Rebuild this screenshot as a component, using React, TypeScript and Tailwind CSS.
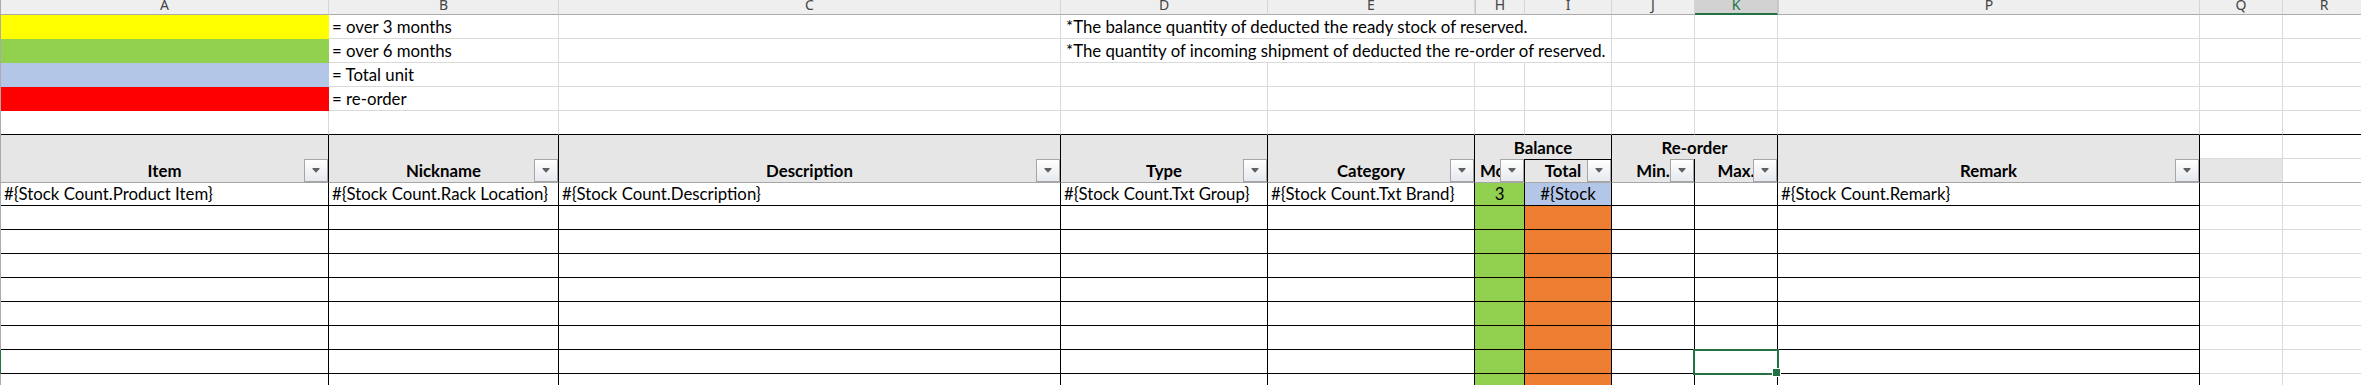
import React from "react";

const COLS =
  "grid grid-cols-[1px_328px_230px_502px_207px_207px_50px_87px_83px_83px_422px_83px_83px]";

const letters = ["A", "B", "C", "D", "E", "H", "I", "J", "K", "P", "Q", "R"];

function FilterBtn() {
  return (
    <div className="absolute right-0 bottom-0 z-10 flex h-[23px] w-[24px] items-center justify-center border border-[#a6a6a6] bg-linear-to-b from-white to-[#e6e9ef]">
      <svg width="8" height="5" viewBox="0 0 8 5">
        <path d="M0.5 0H7.5V1L4 4.8L0.5 1Z" fill="#606060" />
      </svg>
    </div>
  );
}

function T({ children, className = "" }: { children?: React.ReactNode; className?: string }) {
  return <span className={"whitespace-nowrap pb-[1px] " + className}>{children}</span>;
}

const legend = [
  {
    fill: "bg-[#ffff00]",
    label: "= over 3 months",
    note: "*The balance quantity of deducted the ready stock of reserved.",
  },
  {
    fill: "bg-[#92d050]",
    label: "= over 6 months",
    note: "*The quantity of incoming shipment of deducted the re-order of reserved.",
  },
  { fill: "bg-[#b4c6e7]", label: "= Total unit", note: "" },
  { fill: "bg-[#ff0000]", label: "= re-order", note: "" },
];

const GRID = "flex items-end overflow-hidden border-r border-b border-[#dadada]";
const GRID_NOR = "flex items-end border-b border-[#dadada]";
const DATA = "flex items-end overflow-hidden border-r border-b border-black";
const HEAD =
  "relative row-span-2 flex items-end justify-center overflow-hidden bg-[#e7e6e6] border-r border-b border-r-black border-b-[#a6a6a6] font-bold";
const HEAD7 =
  "relative flex items-end justify-center overflow-hidden bg-[#e7e6e6] border-r border-b border-r-black border-b-[#a6a6a6] font-bold";

type DataRow = {
  a?: string;
  b?: string;
  c?: string;
  d?: string;
  e?: string;
  h?: string;
  i?: string;
  p?: string;
};

const dataRows: DataRow[] = [
  {
    a: "#{Stock Count.Product Item}",
    b: "#{Stock Count.Rack Location}",
    c: "#{Stock Count.Description}",
    d: "#{Stock Count.Txt Group}",
    e: "#{Stock Count.Txt Brand}",
    h: "3",
    i: "#{Stock",
    p: "#{Stock Count.Remark}",
  },
  {},
  {},
  {},
  {},
  {},
  {},
  {},
  {},
];

export default function App() {
  return (
    <div className="h-[385px] w-[2361px] overflow-hidden bg-white text-[16.8px] leading-[20px] text-black [font-family:Lato,'Liberation_Sans',sans-serif]">
      {/* Column letters */}
      <div className={`${COLS} h-[15px]`}>
        <div className="bg-[#ababab]" />
        {letters.map((l) =>
          l === "K" ? (
            <div
              key={l}
              className="flex justify-center overflow-hidden border-r border-b-2 border-r-[#c6c6c6] border-b-[#217346] bg-[#d2d2d2] text-[#217346]"
            >
              <span className="-mt-[2px] text-[14px] leading-[14px] [font-family:'Noto_Sans',sans-serif]">{l}</span>
            </div>
          ) : (
            <div
              key={l}
              className={
                l === "H" || l === "P"
                  ? "flex justify-center overflow-hidden border-r border-b border-l border-l-[#c8c8c8] border-r-[#d5d5d5] border-b-[#ababab] bg-[#efefef] text-[#444]"
                  : "flex justify-center overflow-hidden border-r border-b border-r-[#d5d5d5] border-b-[#ababab] bg-[#efefef] text-[#444]"
              }
            >
              <span className="-mt-[2px] text-[14px] leading-[14px] [font-family:'Noto_Sans',sans-serif]">{l}</span>
            </div>
          )
        )}
      </div>

      {/* Legend rows */}
      {legend.map((r, idx) => (
        <div key={idx} className={`${COLS} h-[24px]`}>
          <div className="bg-[#ababab]" />
          <div className={r.fill} />
          <div className={GRID}>
            <T className="px-[3px]">{r.label}</T>
          </div>
          <div className={GRID} />
          {r.note ? (
            <>
              <div className={GRID_NOR}>
                <T className="px-[5px]">{r.note}</T>
              </div>
              <div className={GRID_NOR} />
              <div className={GRID_NOR} />
            </>
          ) : (
            <>
              <div className={GRID} />
              <div className={GRID} />
              <div className={GRID} />
            </>
          )}
          <div className={GRID} />
          <div className={GRID} />
          <div className={GRID} />
          <div className={GRID} />
          <div className={GRID} />
          <div className={GRID} />
        </div>
      ))}

      {/* Row 5: blank with black bottom */}
      <div className={`${COLS} h-[24px]`}>
        <div className="bg-[#ababab]" />
        {letters.map((l) => (
          <div key={l} className="border-r border-b border-r-[#dadada] border-b-black" />
        ))}
      </div>

      {/* Table header, two rows */}
      <div className={`${COLS} grid-rows-[24px_24px]`}>
        <div className="row-span-2 bg-[#ababab]" />
        <div className={HEAD}>
          <T>Item</T>
          <FilterBtn />
        </div>
        <div className={HEAD}>
          <T>Nickname</T>
          <FilterBtn />
        </div>
        <div className={HEAD}>
          <T>Description</T>
          <FilterBtn />
        </div>
        <div className={HEAD}>
          <T>Type</T>
          <FilterBtn />
        </div>
        <div className={HEAD}>
          <T>Category</T>
          <FilterBtn />
        </div>
        <div className="col-span-2 flex items-end justify-center border-r border-r-black bg-[#e7e6e6] font-bold">
          <T>Balance</T>
        </div>
        <div className="col-span-2 flex items-end justify-center border-r border-r-black bg-[#e7e6e6] font-bold">
          <T>Re-order</T>
        </div>
        <div className={HEAD}>
          <T>Remark</T>
          <FilterBtn />
        </div>
        <div className="border-r border-b border-[#dadada]" />
        <div className="border-r border-b border-[#dadada]" />
        {/* row 7 */}
        <div className="relative flex items-end justify-start overflow-hidden border-r border-b border-r-black border-b-[#a6a6a6] bg-[#e7e6e6] font-bold">
          <T className="pl-[5px]">Mon</T>
          <FilterBtn />
        </div>
        <div className="relative flex items-end justify-center overflow-hidden border-t border-r border-b border-t-black border-r-black border-b-[#a6a6a6] bg-[#e7e6e6] font-bold">
          <T className="pr-[10px]">Total</T>
          <FilterBtn />
        </div>
        <div className={HEAD7}>
          <T>Min.</T>
          <FilterBtn />
        </div>
        <div className={HEAD7}>
          <T>Max.</T>
          <FilterBtn />
        </div>
        <div className="border-r border-b border-r-[#dadada] border-b-[#a6a6a6] bg-[#e7e6e6]" />
        <div className="border-r border-b border-r-[#dadada] border-b-[#a6a6a6]" />
      </div>

      {/* Data rows */}
      {dataRows.map((r, idx) => {
        const selected = idx === 7;
        return (
          <div key={idx} className={idx === 0 ? `${COLS} h-[23px]` : `${COLS} h-[24px]`}>
            <div className={selected ? "bg-[#217346]" : "bg-[#ababab]"} />
            <div className={DATA}>
              <T className="px-[3px]">{r.a}</T>
            </div>
            <div className={DATA}>
              <T className="px-[3px]">{r.b}</T>
            </div>
            <div className={DATA}>
              <T className="px-[3px]">{r.c}</T>
            </div>
            <div className={DATA}>
              <T className="px-[3px]">{r.d}</T>
            </div>
            <div className={DATA}>
              <T className="px-[3px]">{r.e}</T>
            </div>
            <div className={DATA + " justify-center bg-[#92d050]"}>
              <T>{r.h}</T>
            </div>
            <div className={idx === 0 ? DATA + " justify-center bg-[#b4c6e7]" : DATA + " bg-[#ed7d31]"}>
              <T>{r.i}</T>
            </div>
            <div className={DATA} />
            {selected ? (
              <div className="relative border-r border-b border-black">
                <div className="absolute top-[-1px] left-[-2px] z-20 h-[26px] w-[86px] border-2 border-[#217346]" />
                <div className="absolute top-[18px] left-[77px] z-30 h-[9px] w-[9px] border border-white bg-[#217346]" />
              </div>
            ) : (
              <div className={DATA} />
            )}
            <div className={DATA}>
              <T className="px-[3px]">{r.p}</T>
            </div>
            <div className={GRID} />
            <div className={GRID} />
          </div>
        );
      })}
    </div>
  );
}
